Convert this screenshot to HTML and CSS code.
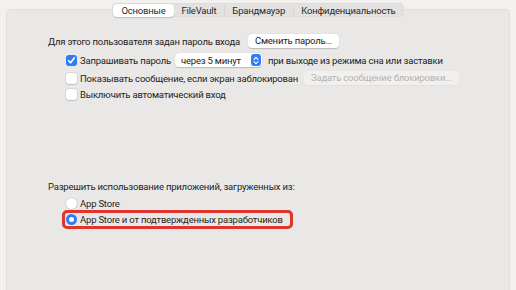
FILE: index.html
```html
<!DOCTYPE html>
<html lang="ru">
<head>
    <meta charset="UTF-8">
    <meta name="viewport" content="width=device-width, initial-scale=1.0">
    <title>Защита и безопасность</title>
    <link rel="stylesheet" href="styles.css">
</head>
<body>
    <div class="tabs">
        <div class="segmented">
            <div class="tab active">Основные</div>
            <div class="tab">FileVault</div>
            <div class="sep"></div>
            <div class="tab">Брандмауэр</div>
            <div class="sep"></div>
            <div class="tab">Конфиденциальность</div>
        </div>
    </div>

    <div class="panel">
        <div class="row first">
            <span>Для этого пользователя задан пароль входа</span>
            <button type="button" class="btn">Сменить пароль...</button>
        </div>

        <div class="row sub r2">
            <span class="checkbox checked">
                <svg width="9" height="9" viewBox="0 0 9 9"><path d="M1.6 4.7 L3.6 6.8 L7.4 1.8" fill="none" stroke="#fff" stroke-width="1.6" stroke-linecap="round" stroke-linejoin="round"/></svg>
            </span>
            <span>Запрашивать пароль</span>
            <div class="popup">
                <span>через 5 минут</span>
                <span class="stepper">
                    <svg width="6" height="9" viewBox="0 0 6 9"><path d="M1 3.4 L3 1.4 L5 3.4 M1 5.6 L3 7.6 L5 5.6" fill="none" stroke="#fff" stroke-width="1.1" stroke-linecap="round" stroke-linejoin="round"/></svg>
                </span>
            </div>
            <span>при выходе из режима сна или заставки</span>
        </div>

        <div class="row sub r3">
            <span class="checkbox"></span>
            <span>Показывать сообщение, если экран заблокирован</span>
            <button type="button" class="btn disabled">Задать сообщение блокировки...</button>
        </div>

        <div class="row sub r4">
            <span class="checkbox"></span>
            <span>Выключить автоматический вход</span>
        </div>

        <div class="row section">
            <span>Разрешить использование приложений, загруженных из:</span>
        </div>

        <div class="row sub radio-row">
            <span class="radio"></span>
            <span>App Store</span>
        </div>

        <div class="row sub">
            <div class="highlight">
                <span class="radio selected"></span>
                <span>App Store и от подтвержденных разработчиков</span>
            </div>
        </div>
    </div>
</body>
</html>
```

FILE: styles.css
```css
body {
    margin: 0;
    height: 290px;
    overflow: hidden;
    background-color: #f2f1f0;
    font-family: Roboto, "Liberation Sans", Arial, sans-serif;
    font-size: 9.5px;
    letter-spacing: -0.2px;
    color: #232323;
}
.tabs {
    display: flex;
    justify-content: center;
    padding-top: 3px;
    position: relative;
    z-index: 1;
}
.segmented {
    display: flex;
    align-items: center;
    height: 14px;
    padding: 0 1px;
    background-color: #e3e2e0;
    border-radius: 5px;
    box-shadow: inset 0 0 0 0.5px #d9d8d6;
}
.tab {
    height: 13px;
    line-height: 13px;
    padding: 0 7.5px;
    color: #2a2a2a;
}
.tab.active {
    padding: 0 8.5px;
    background-color: #fff;
    border-radius: 4px;
    box-shadow: 0 0.5px 1px rgba(0, 0, 0, 0.18);
}
.sep {
    width: 1px;
    height: 9px;
    background-color: #d2d1cf;
}
.panel {
    margin: -8px 6px 0;
    height: 281px;
    box-sizing: border-box;
    padding: 23px 0 0 41px;
    background-color: #e9e8e6;
    border: 1px solid #dfdedc;
    border-bottom: none;
    border-radius: 5px 5px 0 0;
}
.row {
    display: flex;
    align-items: center;
    height: 16px;
    white-space: nowrap;
}
.sub {
    padding-left: 18px;
}
.r2 {
    margin-top: 3px;
}
.r3 {
    margin-top: 2px;
}
.section {
    margin-top: 77px;
    height: 15px;
}
.radio-row {
    margin-top: 2px;
    height: 15px;
}
.btn {
    margin-left: 8px;
    height: 14px;
    padding: 0 7px;
    font-family: inherit;
    font-size: 9.5px;
    letter-spacing: -0.2px;
    line-height: 14px;
    color: #232323;
    background-color: #fff;
    border: none;
    border-radius: 4px;
    box-shadow: 0 0.5px 1px rgba(0, 0, 0, 0.2);
}
.btn.disabled {
    margin-left: 6px;
    padding: 0 7px;
    color: #b4b3b1;
    background-color: #f1f0ef;
    box-shadow: 0 0.5px 0.5px rgba(0, 0, 0, 0.06);
}
.checkbox {
    display: flex;
    align-items: center;
    justify-content: center;
    width: 11px;
    height: 11px;
    margin-right: 3px;
    box-sizing: border-box;
    background-color: #fff;
    border-radius: 3px;
    box-shadow: 0 0 0 0.5px rgba(0, 0, 0, 0.14), 0 0.5px 1px rgba(0, 0, 0, 0.12);
}
.checkbox.checked {
    background-color: #2e7cf6;
    box-shadow: none;
}
.popup {
    display: flex;
    align-items: center;
    justify-content: space-between;
    width: 87px;
    height: 14px;
    margin: 0 6px 0 4px;
    padding: 0 1px 0 6px;
    box-sizing: border-box;
    background-color: #fff;
    border-radius: 4px;
    box-shadow: 0 0.5px 1px rgba(0, 0, 0, 0.2);
}
.stepper {
    display: flex;
    align-items: center;
    justify-content: center;
    width: 10px;
    height: 12px;
    background-color: #2e7cf6;
    border-radius: 3px;
}
.radio {
    width: 11px;
    height: 11px;
    margin-right: 3px;
    box-sizing: border-box;
    background-color: #fff;
    border-radius: 50%;
    box-shadow: 0 0 0 0.5px rgba(0, 0, 0, 0.16), 0 0.5px 1px rgba(0, 0, 0, 0.12);
}
.radio.selected {
    border: 3.5px solid #2e7cf6;
    box-shadow: none;
}
.highlight {
    display: flex;
    align-items: center;
    height: 19px;
    margin-left: -4px;
    margin-top: 1px;
    padding: 0 7px 0 1px;
    box-sizing: border-box;
    border: 3px solid #e0342c;
    border-radius: 5px;
}
```
